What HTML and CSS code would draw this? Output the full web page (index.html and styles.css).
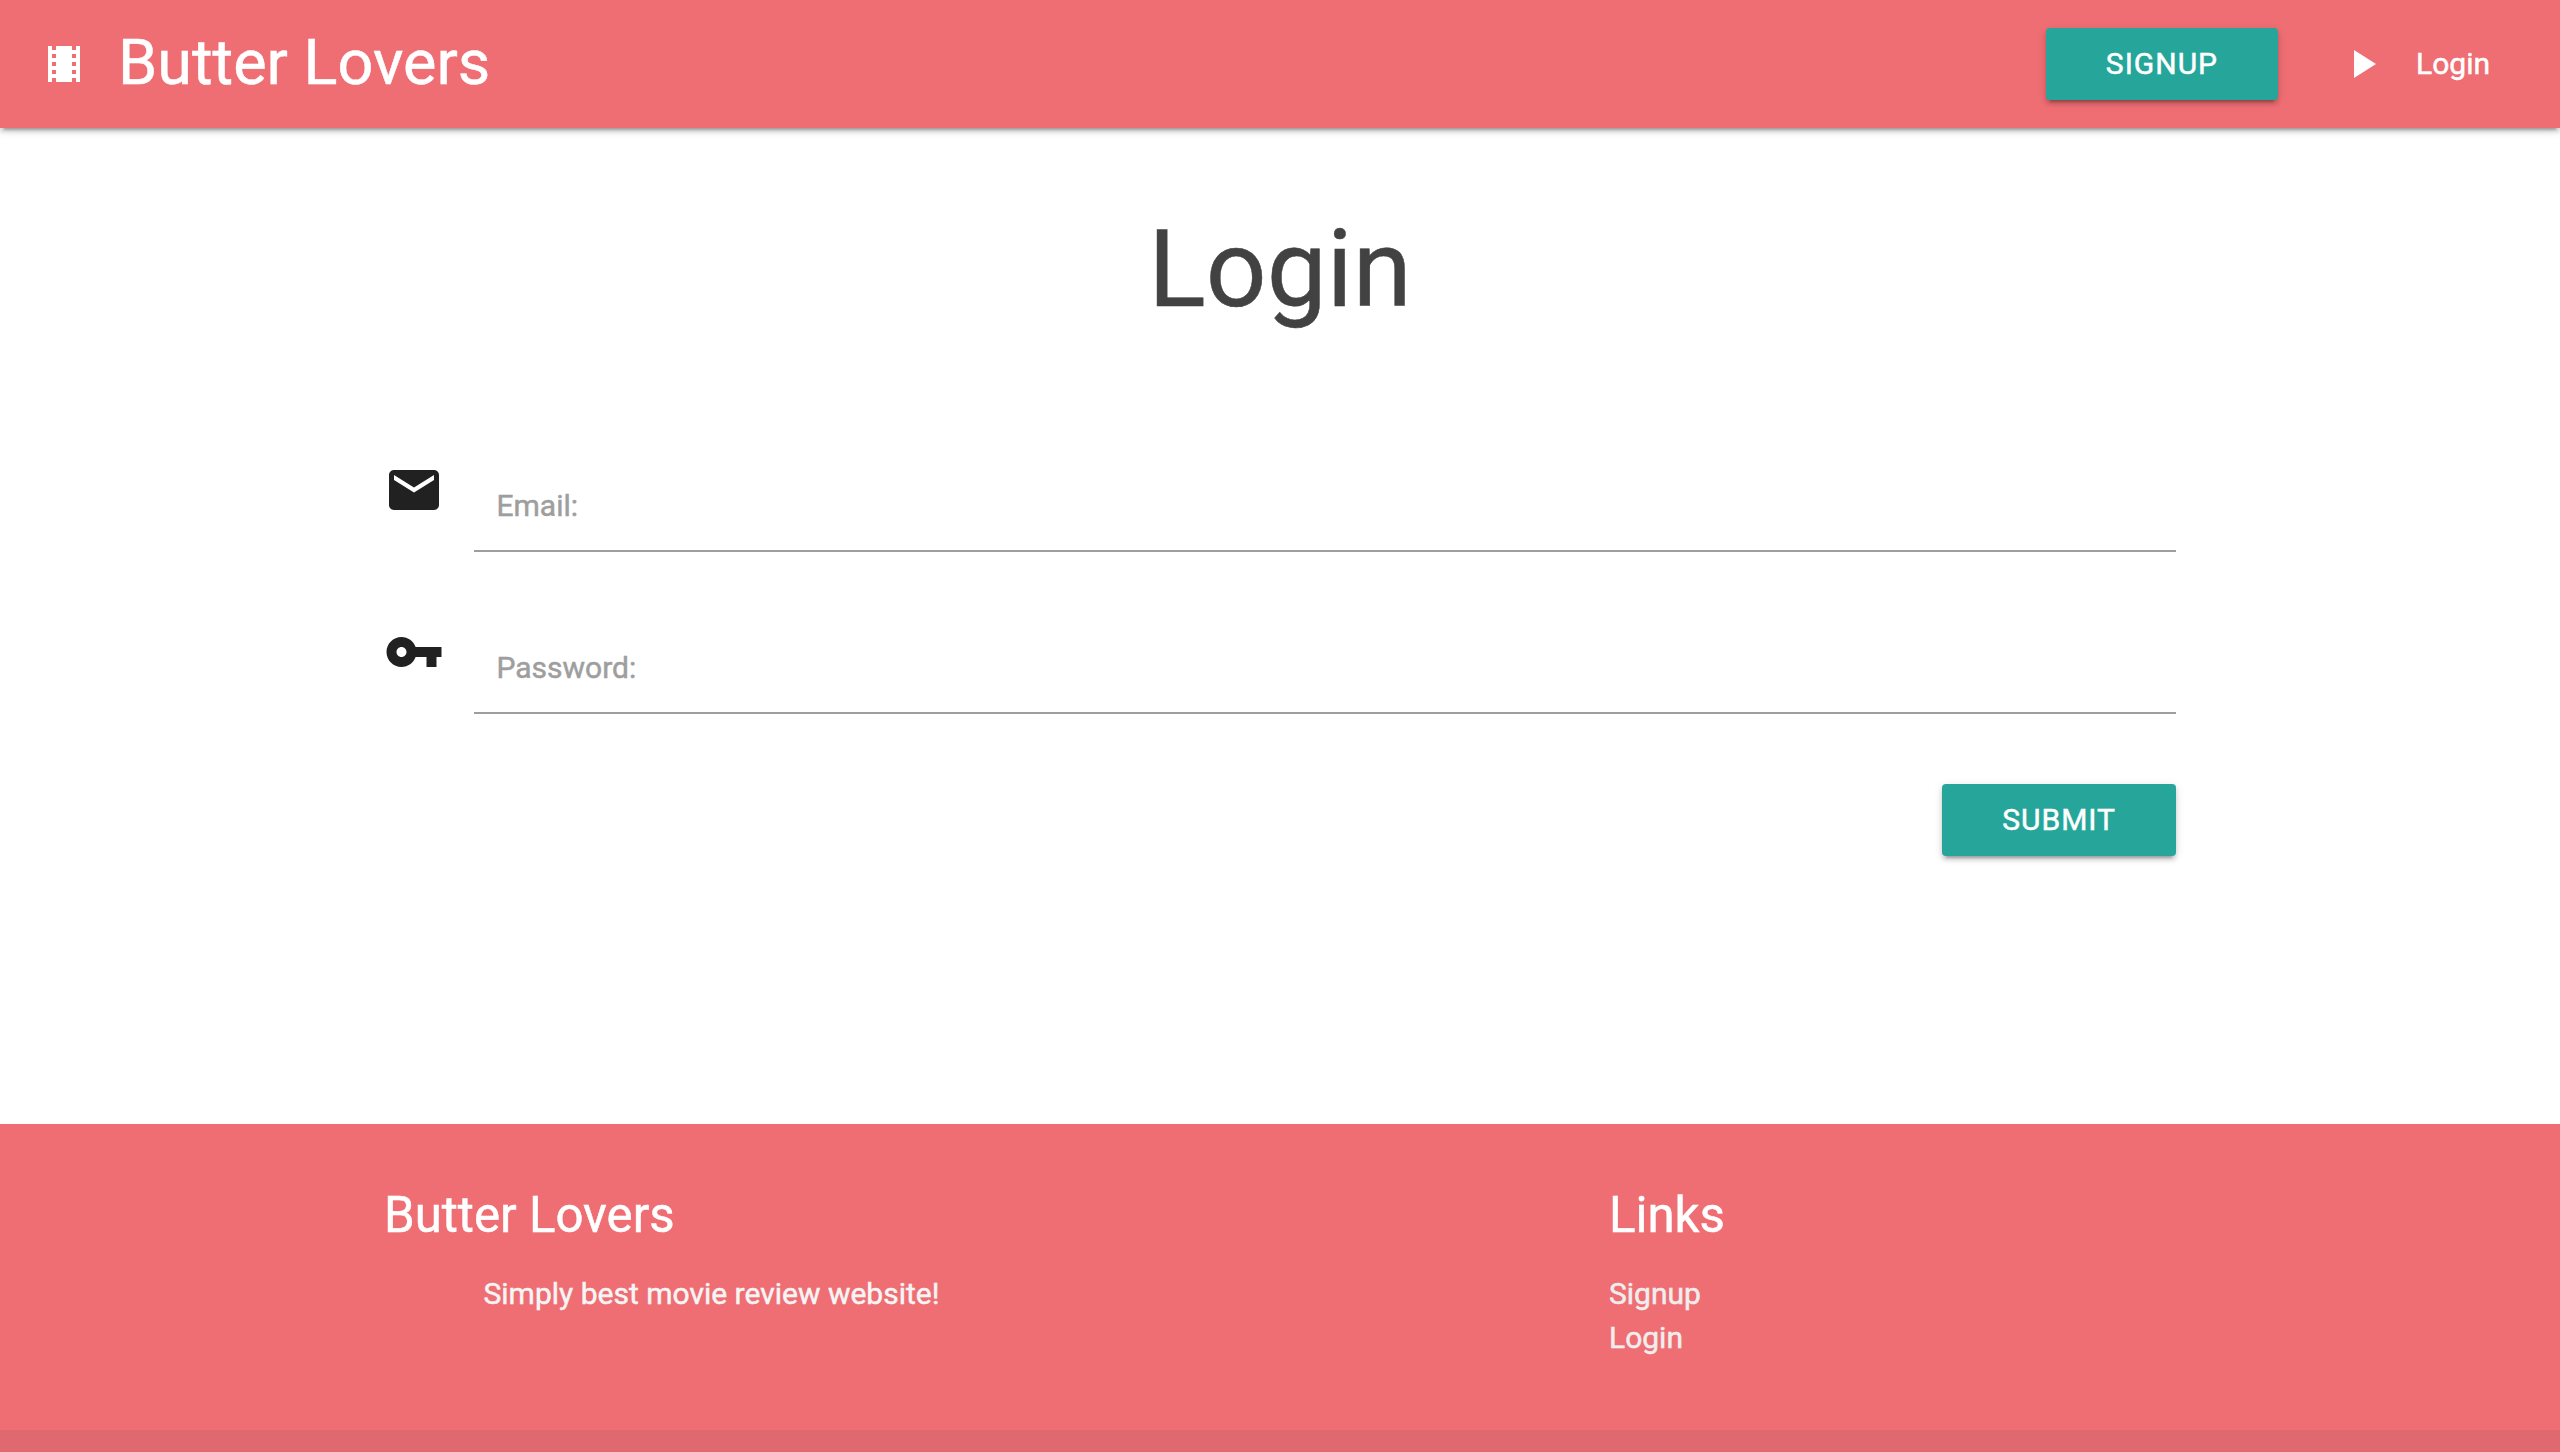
FILE: index.html
```html
<!DOCTYPE html>
<html lang="en">
<head>
<meta charset="utf-8">
<title>Butter Lovers</title>
<link rel="stylesheet" href="styles.css">
</head>
<body>
<nav class="navbar">
  <a class="brand" href="#">
    <svg class="icon" viewBox="0 0 24 24"><path d="M18 3v2h-2V3H8v2H6V3H4v18h2v-2h2v2h8v-2h2v2h2V3h-2zM8 17H6v-2h2v2zm0-4H6v-2h2v2zm0-4H6V7h2v2zm10 8h-2v-2h2v2zm0-4h-2v-2h2v2zm0-4h-2V7h2v2z"/></svg>
    <span class="brand-name">Butter Lovers</span>
  </a>
  <div class="nav-links">
    <a class="btn" href="#">Signup</a>
    <a class="nav-login" href="#">
      <svg class="icon" viewBox="0 0 24 24"><path d="M8 5v14l11-7z"/></svg>
      <span class="nav-text">Login</span>
    </a>
  </div>
</nav>
<main class="container">
  <h2 class="title">Login</h2>
  <form class="form">
    <div class="field">
      <svg class="prefix" viewBox="0 0 24 24"><path d="M20 4H4c-1.100 0-1.990.9-1.990 2L2 18c0 1.100.9 2 2 2h16c1.100 0 2-.9 2-2V6c0-1.100-.9-2-2-2zm0 4l-8 5-8-5V6l8 5 8-5v2z"/></svg>
      <label class="input">Email:</label>
    </div>
    <div class="field">
      <svg class="prefix" viewBox="0 0 24 24"><path d="M12.650 10C11.830 7.670 9.610 6 7 6c-3.310 0-6 2.690-6 6s2.690 6 6 6c2.610 0 4.830-1.670 5.650-4H17v4h4v-4h2v-4H12.650zM7 14c-1.100 0-2-.9-2-2s.9-2 2-2 2 .9 2 2-.9 2-2 2z"/></svg>
      <label class="input">Password:</label>
    </div>
    <button class="btn submit" type="button">Submit</button>
  </form>
</main>
<footer class="footer">
  <div class="container footer-row">
    <section class="about">
      <h5>Butter Lovers</h5>
      <p>Simply best movie review website!</p>
    </section>
    <section class="links">
      <h5>Links</h5>
      <a href="#">Signup</a>
      <a href="#">Login</a>
    </section>
  </div>
  <div class="copyright"></div>
</footer>
</body>
</html>
```

FILE: styles.css
```css
* { box-sizing: border-box; }
html { font: 400 30px/1.5 Roboto, sans-serif; }
body {
  margin: 0;
  height: 1452px;
  display: flex;
  flex-direction: column;
  overflow: hidden;
  background: #fff;
  color: rgba(0, 0, 0, .87);
  -webkit-text-stroke: .5px currentColor;
}
a { color: inherit; text-decoration: none; }
h2, h5, p { margin: 0; font-weight: 400; }
svg { display: block; fill: currentColor; flex: none; }
.icon { width: 48px; height: 48px; }

.navbar {
  flex: none;
  height: 128px;
  padding: 0 70px 0 40px;
  display: flex;
  justify-content: space-between;
  align-items: center;
  background: #ee6e73;
  color: #fff;
  box-shadow: 0 4px 4px 0 rgba(0, 0, 0, .14), 0 2px 10px 0 rgba(0, 0, 0, .12), 0 6px 2px -4px rgba(0, 0, 0, .2);
}
.brand { display: flex; align-items: center; gap: 30px; }
.brand-name { font-size: 63px; line-height: 128px; padding-bottom: 3px; }
.nav-links, .nav-login { display: flex; align-items: center; }
.nav-links { gap: 60px; }
.nav-login { gap: 30px; }
.nav-text { padding-bottom: 1px; }

.btn {
  height: 72px;
  padding: 0 60px 1px;
  border: 0;
  border-radius: 4px;
  background: #26a69a;
  color: #fff;
  font: 400 30px/71px Roboto, sans-serif;
  letter-spacing: 1px;
  text-transform: uppercase;
  box-shadow: 0 4px 4px 0 rgba(0, 0, 0, .14), 0 2px 10px 0 rgba(0, 0, 0, .12), 0 6px 2px -4px rgba(0, 0, 0, .2);
}

.container { width: 1792px; margin: 0 auto; }
.title {
  margin-top: 83px;
  text-align: center;
  font-size: 106.8px;
  line-height: 117px;
  color: #424242;
}
.form { margin-top: 132px; display: flex; flex-direction: column; }
.field { height: 162px; display: flex; }
.prefix { width: 60px; height: 60px; margin-right: 30px; }
.input {
  flex: 1;
  height: 92px;
  padding: 23px 0 0 22.5px;
  border-bottom: 2px solid #9e9e9e;
  color: #9e9e9e;
}
.submit { align-self: flex-end; }

.footer {
  margin-top: auto;
  height: 328px;
  display: flex;
  flex-direction: column;
  background: #ee6e73;
  color: #f5f5f5;
}
.footer-row { flex: 1; display: grid; grid-template-columns: 1225px 1fr; padding-top: 64px; }
.footer h5 { font-size: 49.2px; line-height: 54px; margin-bottom: 29.5px; color: #fff; }
.about p { padding-left: 99.5px; line-height: 44px; }
.links a { display: block; line-height: 44px; color: #eee; }
.copyright { height: 22px; background: rgba(51, 51, 51, .08); }
```
